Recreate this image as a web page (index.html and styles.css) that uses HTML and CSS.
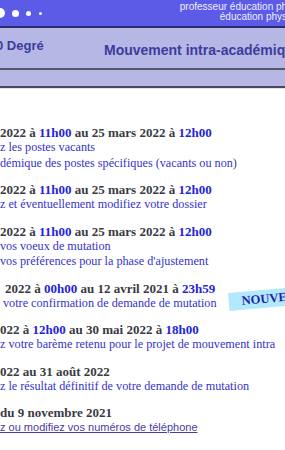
FILE: index.html
```html
<!DOCTYPE html>
<html lang="fr">
<head>
<meta charset="utf-8">
<title>Mouvement intra-académique</title>
<link rel="stylesheet" href="styles.css">
</head>
<body>
<header class="top">
  <div class="dots">
    <span class="dot d1"></span>
    <span class="dot d2"></span>
    <span class="dot d3"></span>
    <span class="dot d4"></span>
  </div>
  <div class="user">
    <div>professeur éducation physique</div>
    <div class="user2">éducation physique</div>
  </div>
</header>
<div class="band1">
  <span class="degre">0 Degré</span>
  <span class="title">Mouvement intra-académique</span>
</div>
<div class="band2"></div>
<main class="list">
  <section class="item">
    <div class="date">2022 à <b>11h00</b> au 25 mars 2022 à <b>12h00</b></div>
    <div class="desc">z les postes vacants</div>
    <div class="desc">démique des postes spécifiques (vacants ou non)</div>
  </section>
  <section class="item">
    <div class="date">2022 à <b>11h00</b> au 25 mars 2022 à <b>12h00</b></div>
    <div class="desc">z et éventuellement modifiez votre dossier</div>
  </section>
  <section class="item">
    <div class="date">2022 à <b>11h00</b> au 25 mars 2022 à <b>12h00</b></div>
    <div class="desc">vos voeux de mutation</div>
    <div class="desc">vos préférences pour la phase d'ajustement</div>
  </section>
  <section class="item new">
    <div class="date shift">2022 à <b>00h00</b> au 12 avril 2021 à <b>23h59</b></div>
    <div class="desc shift-s">votre confirmation de demande de mutation</div>
    <span class="badge">NOUVEAU</span>
  </section>
  <section class="item">
    <div class="date">022 à <b>12h00</b> au 30 mai 2022 à <b>18h00</b></div>
    <div class="desc">z votre barème retenu pour le projet de mouvement intra</div>
  </section>
  <section class="item">
    <div class="date">022 au 31 août 2022</div>
    <div class="desc">z le résultat définitif de votre demande de mutation</div>
  </section>
  <section class="item">
    <div class="date">du 9 novembre 2021</div>
    <a class="link" href="#">z ou modifiez vos numéros de téléphone</a>
  </section>
</main>
</body>
</html>
```
FILE: styles.css
```css
html, body {
  margin: 0;
  padding: 0;
  background: #ffffff;
  overflow: hidden;
  width: 285px;
}
body {
  font-family: "Liberation Serif", serif;
}
.top {
  height: 26px;
  background: #5b5be7;
  border-bottom: 2px solid #2b2b6e;
  display: flex;
  justify-content: space-between;
  align-items: flex-start;
  overflow: hidden;
  white-space: nowrap;
}
.dots {
  display: flex;
  align-items: center;
  height: 26px;
  margin-left: -5px;
  flex: none;
}
.dot {
  display: block;
  background: #ffffff;
  border-radius: 50%;
}
.d1 { width: 10px; height: 10px; margin-right: 7px; }
.d2 { width: 7px; height: 7px; margin-right: 7px; }
.d3 { width: 5px; height: 5px; margin-right: 8px; }
.d4 { width: 3px; height: 3px; }
.user {
  flex: none;
  font-family: "Liberation Sans", Arial, sans-serif;
  font-size: 10px;
  line-height: 10px;
  color: #f0f0ff;
  text-align: right;
  padding-top: 2px;
  margin-right: -31px;
}
.user2 { margin-right: 10px; }
.band1 {
  height: 40px;
  background: #b7b7e6;
  border-bottom: 2px solid #55556a;
  display: flex;
  align-items: center;
  white-space: nowrap;
  overflow: hidden;
  font-family: "Liberation Sans", Arial, sans-serif;
  font-weight: bold;
  color: #3c3c9c;
}
.degre {
  font-size: 13px;
  margin-left: -4px;
  margin-top: -6px;
  width: 108px;
  flex: none;
}
.title {
  flex: none;
  font-size: 14px;
  margin-top: 4px;
}
.band2 {
  height: 16px;
  background: #b7b7e6;
  border-bottom: 2px solid #4a4a5a;
  box-shadow: 0 1px 0 #e4e4e4;
}
.list {
  padding-top: 37px;
  white-space: nowrap;
}
.item {
  margin-bottom: 11px;
  position: relative;
}
.date {
  font-weight: bold;
  font-size: 13px;
  line-height: 15px;
  color: #3a3a44;
}
.date b { color: #2424dc; }
.desc {
  font-size: 12.2px;
  line-height: 15.5px;
  color: #3434c8;
}
.shift { padding-left: 5px; }
.shift-s { padding-left: 3px; }
.link {
  display: block;
  font-family: "Liberation Sans", Arial, sans-serif;
  font-size: 11px;
  line-height: 15px;
  color: #4a3aa6;
  text-decoration: underline;
}
.badge {
  position: absolute;
  left: 228px;
  top: 12px;
  width: 70px;
  height: 18px;
  background: #b3e9fc;
  color: #2020b0;
  font-weight: bold;
  font-size: 12.5px;
  line-height: 19px;
  padding-left: 13px;
  transform: rotate(-5deg);
  transform-origin: left top;
}
```
